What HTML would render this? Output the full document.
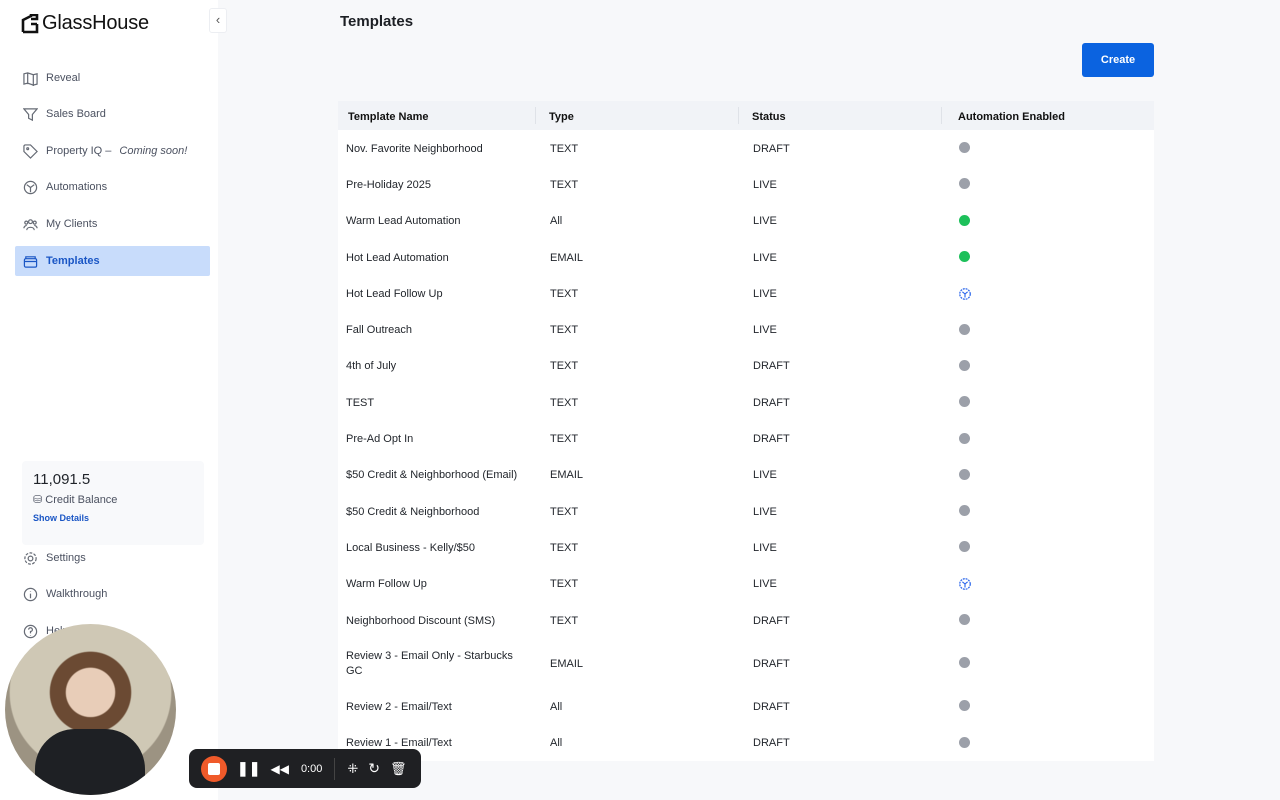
<!DOCTYPE html>
<html><head><style>
*{box-sizing:border-box;margin:0;padding:0}
body{width:1280px;height:800px;overflow:hidden;background:#f7f8fa;font-family:"Liberation Sans",sans-serif;position:relative;color:#1f2329}
.side{position:absolute;left:0;top:0;width:218px;height:800px;background:#fff}
.logo{position:absolute;left:21px;top:12px;font-size:20px;font-weight:500;color:#111;display:flex;align-items:center;gap:1px;letter-spacing:-0.2px}
.collapse{position:absolute;left:209px;top:8px;width:18px;height:25px;background:#fff;border:1px solid #eceef2;border-radius:3px;font-size:13px;color:#555;text-align:center;line-height:22px}
.nav{position:absolute;left:15px;width:195px;height:30px;display:flex;align-items:center;font-size:11px;color:#4b5160;padding-left:8px;gap:8px}
.nav svg{width:15px;height:15px;stroke:#666b75;fill:none;stroke-width:1.3}
.nav.act{background:#c8dcfb;color:#1a56c5;font-weight:bold;border-radius:2px}
.nav.act svg{stroke:#1a56c5}
.credit{position:absolute;left:22px;top:461px;width:182px;height:84px;background:#f8f9fb;border-radius:4px;padding:10px 11px}
.main h1{position:absolute;left:340px;top:13px;font-size:15px;font-weight:bold;color:#1c1f24}
.btn{position:absolute;left:1082px;top:43px;width:72px;height:34px;background:#0b63e0;color:#fff;border-radius:3px;font-size:11px;font-weight:bold;text-align:center;line-height:34px}
table{position:absolute;left:338px;top:101px;width:816px;border-collapse:collapse;font-size:11px;background:#fff}
th{background:#f1f3f7;height:29px;text-align:left;font-weight:bold;color:#111;padding-left:10px;position:relative;padding-top:2px}
th+th:before{content:"";position:absolute;left:0;top:6px;height:17px;border-left:1px solid #dfe2e8}
td{height:36.3px;padding-left:8px;color:#22262c;padding-top:1px}
td:nth-child(1){width:197px}td:nth-child(2){width:203px}td:nth-child(3){width:203px}
th:nth-child(2),th:nth-child(3){padding-left:14px}td:nth-child(2),td:nth-child(3){padding-left:15px}
th:nth-child(4){padding-left:17px}td:nth-child(4){padding-left:18px}
.d{display:inline-block;width:11px;height:11px;border-radius:50%;background:#9ca0a9;vertical-align:-1px}
.g{background:#1dc05a}
.cam{position:absolute;left:5px;top:624px;width:171px;height:171px;border-radius:50%;background:radial-gradient(circle at 50% 40%,#e8cdb8 0 18%,#6b4a33 19% 30%,#cfc8b5 31% 60%,#9c9382 61%);overflow:hidden}
.shirt{position:absolute;left:30px;top:105px;width:110px;height:80px;background:#1e2024;border-radius:40px 40px 0 0}
.bar{position:absolute;left:189px;top:749px;width:232px;height:39px;background:#1f2023;border-radius:8px;display:flex;align-items:center;color:#fff;font-size:11px}
</style></head><body>
<div class="side">
<div class="logo"><svg width="20" height="20" viewBox="0 0 20 20"><path d="M2 18V6l8-4v-1h6v4h-6M16 10h-6M16 10v8H2" stroke="#111" stroke-width="2.6" fill="none"/></svg>GlassHouse</div>
<div class="nav" style="top:63px"><svg viewBox="0 0 16 16"><path d="M1 3l4-1 6 2 4-1v11l-4 1-6-2-4 1z M5 2v12M11 4v12"/></svg>Reveal</div>
<div class="nav" style="top:99px"><svg viewBox="0 0 16 16"><path d="M1 2h14l-5 6v6l-4-2v-4z"/></svg>Sales Board</div>
<div class="nav" style="top:136px"><svg viewBox="0 0 16 16"><path d="M1 2v6l7 7 7-7-7-7H2z"/><circle cx="5" cy="5" r="1"/></svg>Property IQ – <i>Coming soon!</i></div>
<div class="nav" style="top:172px"><svg viewBox="0 0 16 16"><circle cx="8" cy="8" r="6.5"/><path d="M8 8l-4-3M8 8l4-3M8 8v5"/></svg>Automations</div>
<div class="nav" style="top:209px"><svg viewBox="0 0 16 16"><circle cx="8" cy="5" r="2"/><circle cx="3.5" cy="6" r="1.6"/><circle cx="12.5" cy="6" r="1.6"/><path d="M4 14c0-4 8-4 8 0M1 12c0-2 2-3 3-3M15 12c0-2-2-3-3-3"/></svg>My Clients</div>
<div class="nav act" style="top:246px"><svg viewBox="0 0 16 16"><rect x="1.5" y="5" width="13" height="9" rx="1.5"/><path d="M3 5V3h10v2M1.5 8h13"/></svg>Templates</div>
<div class="credit"><div style="font-size:15px;color:#1f2329">11,091.5</div><div style="font-size:11px;color:#4b5160;margin-top:5px">⛁ Credit Balance</div><div style="font-size:9px;color:#1a56c5;font-weight:bold;margin-top:7px">Show Details</div></div>
<div class="nav" style="top:543px"><svg viewBox="0 0 16 16"><circle cx="8" cy="8" r="2.5"/><circle cx="8" cy="8" r="6" stroke-dasharray="3 1.5"/></svg>Settings</div>
<div class="nav" style="top:579px"><svg viewBox="0 0 16 16"><circle cx="8" cy="8" r="6.5"/><path d="M8 7v5M8 4.5v.5"/></svg>Walkthrough</div>
<div class="nav" style="top:616px"><svg viewBox="0 0 16 16"><circle cx="8" cy="8" r="6.5"/><path d="M6 6a2 2 0 1 1 2 2v2M8 12v.5"/></svg>Help</div>
</div>
<div class="collapse">‹</div>
<div class="main"><h1>Templates</h1><div class="btn">Create</div>
<table>
<tr><th>Template Name</th><th>Type</th><th>Status</th><th>Automation Enabled</th></tr>
<tr><td>Nov. Favorite Neighborhood</td><td>TEXT</td><td>DRAFT</td><td><span class="d"></span></td></tr>
<tr><td>Pre-Holiday 2025</td><td>TEXT</td><td>LIVE</td><td><span class="d"></span></td></tr>
<tr><td>Warm Lead Automation</td><td>All</td><td>LIVE</td><td><span class="d g"></span></td></tr>
<tr><td>Hot Lead Automation</td><td>EMAIL</td><td>LIVE</td><td><span class="d g"></span></td></tr>
<tr><td>Hot Lead Follow Up</td><td>TEXT</td><td>LIVE</td><td><svg width="14" height="14" viewBox="0 0 16 16" style="vertical-align:middle;margin-left:-1px"><circle cx="8" cy="8" r="6" fill="none" stroke="#2563eb" stroke-width="1.4" stroke-dasharray="2.2 1"/><path d="M8 8L5 5.5M8 8l3-2.5M8 8v4" stroke="#2563eb" stroke-width="1.3"/></svg></td></tr>
<tr><td>Fall Outreach</td><td>TEXT</td><td>LIVE</td><td><span class="d"></span></td></tr>
<tr><td>4th of July</td><td>TEXT</td><td>DRAFT</td><td><span class="d"></span></td></tr>
<tr><td>TEST</td><td>TEXT</td><td>DRAFT</td><td><span class="d"></span></td></tr>
<tr><td>Pre-Ad Opt In</td><td>TEXT</td><td>DRAFT</td><td><span class="d"></span></td></tr>
<tr><td>$50 Credit &amp; Neighborhood (Email)</td><td>EMAIL</td><td>LIVE</td><td><span class="d"></span></td></tr>
<tr><td>$50 Credit &amp; Neighborhood</td><td>TEXT</td><td>LIVE</td><td><span class="d"></span></td></tr>
<tr><td>Local Business - Kelly/$50</td><td>TEXT</td><td>LIVE</td><td><span class="d"></span></td></tr>
<tr><td>Warm Follow Up</td><td>TEXT</td><td>LIVE</td><td><svg width="14" height="14" viewBox="0 0 16 16" style="vertical-align:middle;margin-left:-1px"><circle cx="8" cy="8" r="6" fill="none" stroke="#2563eb" stroke-width="1.4" stroke-dasharray="2.2 1"/><path d="M8 8L5 5.5M8 8l3-2.5M8 8v4" stroke="#2563eb" stroke-width="1.3"/></svg></td></tr>
<tr><td>Neighborhood Discount (SMS)</td><td>TEXT</td><td>DRAFT</td><td><span class="d"></span></td></tr>
<tr><td style="height:50px;line-height:15px"><span style="display:block;width:178px">Review 3 - Email Only - Starbucks GC</span></td><td>EMAIL</td><td>DRAFT</td><td><span class="d"></span></td></tr>
<tr><td>Review 2 - Email/Text</td><td>All</td><td>DRAFT</td><td><span class="d"></span></td></tr>
<tr><td>Review 1 - Email/Text</td><td>All</td><td>DRAFT</td><td><span class="d"></span></td></tr>
</table></div>
<div class="cam"><div class="shirt"></div></div>
<div class="bar"><div style="margin-left:12px;width:26px;height:26px;border-radius:50%;background:#f05a2a;display:flex;align-items:center;justify-content:center"><div style="width:12px;height:12px;background:#fff;border-radius:2px"></div></div>
<div style="margin-left:10px;font-weight:bold;font-size:14px">❚❚</div><div style="margin-left:10px;font-size:12px">◀◀</div><div style="margin-left:12px">0:00</div>
<div style="margin-left:12px;width:1px;height:22px;background:#444"></div><div style="margin-left:12px;font-size:13px">⁜</div><div style="margin-left:10px;font-size:14px">↻</div><div style="margin-left:10px;font-size:13px">🗑</div></div>
</body></html>
